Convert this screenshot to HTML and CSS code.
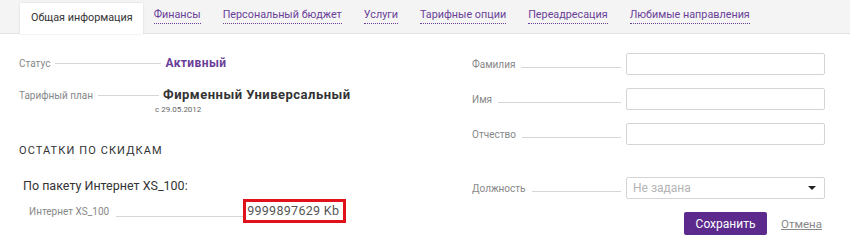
FILE: index.html
```html
<!DOCTYPE html>
<html lang="ru">
  <head>
    <meta charset="UTF-8" />
    <title>Общая информация</title>
    <link rel="stylesheet" href="styles.css">
  </head>
  <body>
    <div class="tabs">
      <span class="tab active">Общая информация</span>
      <a class="tab" href="#">Финансы</a>
      <a class="tab" href="#">Персональный бюджет</a>
      <a class="tab" href="#">Услуги</a>
      <a class="tab" href="#">Тарифные опции</a>
      <a class="tab" href="#">Переадресация</a>
      <a class="tab" href="#">Любимые направления</a>
    </div>

    <div class="content">
      <div class="left">
        <div class="row row-status">
          <span class="label">Статус</span>
          <span class="leader"></span>
          <span class="value status">Активный</span>
        </div>
        <div class="row row-plan">
          <span class="label">Тарифный план</span>
          <span class="leader"></span>
          <span class="value plan">Фирменный Универсальный</span>
        </div>
        <div class="plan-date">с 29.05.2012</div>

        <h2 class="section-title">Остатки по скидкам</h2>
        <div class="package">По пакету Интернет XS_100:</div>
        <div class="row row-rest">
          <span class="label">Интернет XS_100</span>
          <span class="leader"></span>
          <span class="value rest">9999897629 Kb</span>
        </div>
      </div>

      <form class="right">
        <div class="field">
          <span class="label">Фамилия</span>
          <span class="leader"></span>
          <input class="input" type="text" />
        </div>
        <div class="field">
          <span class="label">Имя</span>
          <span class="leader"></span>
          <input class="input" type="text" />
        </div>
        <div class="field">
          <span class="label">Отчество</span>
          <span class="leader"></span>
          <input class="input" type="text" />
        </div>
        <div class="field field-post">
          <span class="label">Должность</span>
          <span class="leader"></span>
          <div class="input select">
            <span class="placeholder">Не задана</span>
            <span class="caret"></span>
          </div>
        </div>
        <div class="actions">
          <button class="save-btn" type="button">Сохранить</button>
          <a class="cancel" href="#">Отмена</a>
        </div>
      </form>
    </div>
  </body>
</html>
```

FILE: styles.css
```css
* {
  margin: 0;
  padding: 0;
  box-sizing: border-box;
}

body {
  background: #fff;
  font-family: Roboto, "Noto Sans", sans-serif;
  color: #333;
  width: 850px;
  height: 246px;
  overflow: hidden;
}

.tabs {
  display: flex;
  align-items: flex-end;
  height: 34px;
  padding-left: 20px;
  background: #f4f4f4;
  border-bottom: 1px solid #e3e3e3;
}

.tab {
  font-size: 10.8px;
  line-height: 16px;
  color: #6a3f99;
  text-decoration: none;
  border-bottom: 1px dotted #6a3f99;
  margin: 0 11px 9px 11px;
  white-space: nowrap;
}

.tab.active {
  color: #333;
  border: none;
  background: #fff;
  margin: 0 0 -1px 0;
  padding: 7px 10px 8px 11px;
  height: 31px;
  box-shadow: 0 0 2px rgba(0, 0, 0, 0.12);
}

.content {
  display: flex;
  padding: 0 25px 0 19px;
}

.left {
  width: 453px;
}

.right {
  flex: 1;
  padding-top: 19px;
}

.row {
  display: flex;
  align-items: baseline;
  white-space: nowrap;
}

.label {
  font-size: 10px;
  color: #888;
  white-space: nowrap;
}

.leader {
  flex: none;
  border-bottom: 1px solid #d6d6d6;
  align-self: flex-end;
  margin: 0 4px 6px 5px;
}

.row-status {
  margin-top: 22px;
}

.row-status .leader {
  width: 106px;
}

.row-plan .leader {
  width: 61px;
}

.row-plan {
  margin-top: 17px;
}

.status {
  font-size: 12px;
  font-weight: bold;
  color: #6a3f99;
  letter-spacing: 0.4px;
}

.plan {
  font-size: 13px;
  font-weight: bold;
  color: #333;
  letter-spacing: 0.5px;
}

.plan-date {
  font-size: 8px;
  color: #666;
  margin-left: 136px;
  margin-top: 3px;
}

.section-title {
  font-size: 11px;
  font-weight: normal;
  text-transform: uppercase;
  letter-spacing: 1.1px;
  color: #333;
  margin-top: 30px;
}

.package {
  font-size: 12.5px;
  color: #333;
  margin: 21px 0 0 4px;
}

.row-rest {
  margin: 6px 0 0 10px;
}

.row-rest .leader {
  width: 127px;
  margin: 0 0 6px 7px;
}

.rest {
  font-size: 12.5px;
  color: #555;
  letter-spacing: 0.3px;
  padding: 1px 4px 2px 1px;
  border: 3px solid #e0111b;
}

.field {
  display: flex;
  align-items: center;
  margin-bottom: 13px;
}

.field .leader {
  flex: 1;
  align-self: center;
  margin: 7px 5px 0 6px;
}

.input {
  width: 199px;
  height: 22px;
  border: 1px solid #d4d4d4;
  border-radius: 2px;
  background: #fff;
  font-family: inherit;
}

.field-post {
  margin-top: 32px;
  margin-bottom: 13px;
}

.select {
  display: flex;
  align-items: center;
  justify-content: space-between;
  padding: 0 8px 0 6px;
}

.placeholder {
  font-size: 12px;
  color: #b4b4b4;
}

.caret {
  width: 0;
  height: 0;
  border-left: 4px solid transparent;
  border-right: 4px solid transparent;
  border-top: 4px solid #222;
}

.actions {
  display: flex;
  align-items: center;
  justify-content: flex-end;
  gap: 14px;
  padding-right: 3px;
  margin-top: 1px;
}

.save-btn {
  width: 83px;
  height: 23px;
  border: none;
  border-radius: 2px;
  background: #5b2a8c;
  color: #fff;
  font-family: inherit;
  font-size: 12px;
  cursor: pointer;
}

.cancel {
  font-size: 11.5px;
  color: #888;
  text-decoration: underline;
}
```
